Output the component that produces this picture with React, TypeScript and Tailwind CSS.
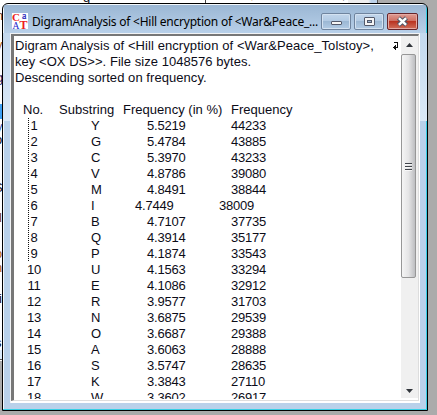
const rows = [
  ['1', 'Y', '5.5219', '44233'], ['2', 'G', '5.4784', '43885'], ['3', 'C', '5.3970', '43233'],
  ['4', 'V', '4.8786', '39080'], ['5', 'M', '4.8491', '38844'], ['6', 'I', '4.7449', '38009'],
  ['7', 'B', '4.7107', '37735'], ['8', 'Q', '4.3914', '35177'], ['9', 'P', '4.1874', '33543'],
  ['10', 'U', '4.1563', '33294'], ['11', 'E', '4.1086', '32912'], ['12', 'R', '3.9577', '31703'],
  ['13', 'N', '3.6875', '29539'], ['14', 'O', '3.6687', '29388'], ['15', 'A', '3.6063', '28888'],
  ['16', 'S', '3.5747', '28635'], ['17', 'K', '3.3843', '27110'], ['18', 'W', '3.3602', '26917'],
];

function AppIcon() {
  return (
    <svg width="17" height="17" viewBox="0 0 17 17" className="shrink-0" fontFamily="'Liberation Serif', serif">
      <rect width="16" height="16" fill="#fff" />
      <text x="0" y="8.1" fontSize="11" fontWeight="bold" fill="#ed1c24">C</text>
      <text x="10" y="6" fontSize="10" fill="#2222bb" stroke="#2222bb" strokeWidth="0.2">a</text>
      <text x="0.6" y="15.6" fontSize="9.5" fill="#2222cc">A</text>
      <text x="7.6" y="15.8" fontSize="12" fontWeight="bold" fill="#ed1c24">T</text>
    </svg>
  );
}

function Controls() {
  return (
    <svg width="98" height="17" viewBox="0 0 98 17" className="shrink-0">
      <defs>
        <linearGradient id="btn" x1="0" y1="0" x2="0" y2="1">
          <stop offset="0" stopColor="#c3d7ec" /><stop offset=".46" stopColor="#b2cae3" />
          <stop offset=".48" stopColor="#9bb7d3" /><stop offset="1" stopColor="#b4cde6" />
        </linearGradient>
        <linearGradient id="close" x1="0" y1="0" x2="0" y2="1">
          <stop offset="0" stopColor="#df9f97" /><stop offset=".46" stopColor="#cf6f62" />
          <stop offset=".48" stopColor="#b9311f" /><stop offset="1" stopColor="#d2735e" />
        </linearGradient>
      </defs>
      <g strokeWidth="1">
        <rect x=".5" y=".5" width="29" height="16" rx="1.5" fill="url(#btn)" stroke="#6f849e" />
        <rect x="1.5" y="1.5" width="27" height="14" rx="1" fill="none" stroke="#d4e2f1" />
        <rect x="33.5" y=".5" width="29" height="16" rx="1.5" fill="url(#btn)" stroke="#6f849e" />
        <rect x="34.5" y="1.5" width="27" height="14" rx="1" fill="none" stroke="#d4e2f1" />
        <rect x="66.5" y=".5" width="30" height="16" rx="1.5" fill="url(#close)" stroke="#66242a" />
        <rect x="67.5" y="1.5" width="28" height="14" rx="1" fill="none" stroke="#e5aaa4" />
        <rect x="10.5" y="8.5" width="10" height="3" rx=".5" fill="#f5f5f5" stroke="#53596a" />
        <rect x="43.5" y="4.5" width="10" height="8" rx=".5" fill="#f5f5f5" stroke="#53596a" />
        <rect x="46.5" y="7.5" width="4" height="2" fill="#9db7d2" stroke="#53596a" />
      </g>
      <path d="M77.5 5 85.5 12M85.5 5 77.5 12" stroke="#535666" strokeWidth="4.6" />
      <path d="M77.9 5.2 85.1 11.8M85.1 5.2 77.9 11.8" stroke="#fff" strokeWidth="2.5" />
    </svg>
  );
}

function ScrollBar() {
  return (
    <div className="flex h-[362px] w-[17px] shrink-0 flex-col items-start bg-[#f0f0f0]">
      <svg width="17" height="18" viewBox="0 0 17 18"><path d="M5 11h7L8.5 7z" fill="#30343a" /></svg>
      <div className="flex h-[224px] w-[15px] items-center justify-center rounded-[2px] border border-[#979797] bg-linear-to-r from-[#f5f5f5] via-[#e5e5e6] to-[#bdbec1]">
        <svg width="9" height="9" viewBox="0 0 9 9">
          <path d="M1 1.5h7M1 4.5h7M1 7.5h7" stroke="#40444a" />
          <path d="M1 2.5h7M1 5.5h7M1 8.5h7" stroke="#fff" strokeWidth=".7" />
        </svg>
      </div>
      <div className="grow" />
      <svg width="17" height="18" viewBox="0 0 17 18"><path d="M5 9h7l-3.5 4z" fill="#30343a" /></svg>
    </div>
  );
}

function BackgroundWindow() {
  return (
    <div className="flex h-[361px] w-[378px] items-start bg-white">
      <div className="flex h-[361px] w-[2px] shrink-0 flex-col overflow-hidden whitespace-nowrap">
        <span className="mt-[8px] -ml-1 text-[#713b22]">n</span>
        <span className="mt-[13px] -ml-1 text-[#a75a20]">y</span>
        <span className="mt-[17px] -ml-1 text-[#202060]">g</span>
        <div className="mt-[18px] h-[15px] w-[2px] shrink-0 bg-[#3da0f4]" />
        <span className="-ml-1 h-[13px] text-[#3158b0]">y</span>
        <span className="-ml-[5px]">o</span>
        <span className="mt-8 -ml-1.5">S</span>
        <span className="mt-[14px] -ml-px text-[#713b22]">l</span>
        <span className="mt-5 -ml-[5px] h-[14px] text-[#a75a20]">o</span>
        <span className="-ml-[5px] text-[#a75a20]">n</span>
        <span className="mt-[15px] -ml-px">i</span>
        <span className="mt-7 -ml-[5px] h-[15px]">s</span>
        <div className="h-[10px] w-[3px] shrink-0 border-b border-[#555] bg-[#dcebfa]" />
      </div>
      <div className="flex h-3 grow items-start overflow-hidden">
        <span className="-mt-[10px] ml-[81px]">g</span>
        <div className="ml-[115px] h-1 w-px bg-[#444]" />
        <span className="-mt-[13px] ml-[44px] text-[#bd7b24]">,</span>
        <span className="-mt-[13px] ml-[88px]">,</span>
        <div className="ml-[3px] h-3 grow border-r border-[#555] bg-linear-to-r from-[#eee] from-70% to-[#bcd2ea] to-80%" />
      </div>
    </div>
  );
}

export default function App() {
  return (
    <div className="relative h-[415px] w-[437px] overflow-hidden bg-[#ababab] font-['Liberation_Sans',Arial,sans-serif] text-[13px] leading-4 text-[#0c0c18]">
      <BackgroundWindow />

      <div className="absolute top-[3px] left-[2px] flex h-[408px] w-[426px] flex-col overflow-hidden rounded-t-[6px] border border-black bg-[#b9d1ea] shadow-[inset_-1px_-1px_0_#35cfe5,inset_1px_1px_0_#f3f8fc]">
        <div className="mx-px mt-px flex h-[28px] shrink-0 items-end bg-linear-to-b from-[#9bb7d4] to-[#b8d0e9] pr-[8px] pb-[3px] pl-[8px]">
          <AppIcon />
          <span className="ml-[3px] w-[286px] shrink-0 whitespace-nowrap font-['Noto_Sans','Open_Sans',sans-serif] text-[12px] tracking-[-0.23px] text-black">DigramAnalysis of &lt;Hill encryption of &lt;War&amp;Peace_...</span>
          <div className="ml-[3px] flex"><Controls /></div>
        </div>
        <div className="flex h-[370px] shrink-0 bg-linear-to-b from-[#c3d8ee] to-[#dbe9f7] bg-[length:100%_88px] bg-no-repeat pl-[7px]">
          <div className="flex h-[370px] w-[410px] border-t border-l border-[#f1f3f5] bg-white">
            <div className="flex h-[367px] w-[408px] border-t-2 border-r border-b border-l-3 border-t-[#777] border-r-[#ddd] border-b-[#ddd] border-l-[#777]">
              <div className="h-[363px] w-[387px] shrink-0 overflow-hidden bg-white pt-[2px]">
                <div className="flex justify-between pr-[2px] pl-[1px] whitespace-nowrap">
                  <div>
                    <p className="tracking-[0.085px]">Digram Analysis of &lt;Hill encryption of &lt;War&amp;Peace_Tolstoy&gt;,</p>
                    <p className="tracking-[0.045px]">key &lt;OX DS&gt;&gt;. File size 1048576 bytes.</p>
                    <p className="tracking-[0.06px]">Descending sorted on frequency.</p>
                  </div>
                  <svg className="mt-1" width="6" height="10" viewBox="0 0 6 10" fill="#111" shapeRendering="crispEdges">
                    <path d="M1 0h4v1H1zM4 0h1v6H4zM0 5h5v1H0zM1 4h1v3H1zM2 3h1v5H2z" />
                  </svg>
                </div>
                <div className="mt-4 flex h-4 whitespace-nowrap pl-[9px]">
                  <span className="w-[36px] shrink-0">No.</span>
                  <span className="w-[64px] shrink-0 tracking-[0.05px]">Substring</span>
                  <span className="w-[108px] shrink-0 tracking-[0.03px]">Frequency (in %)</span>
                  <span>Frequency</span>
                </div>
                <div className="relative">
                  {rows.map(([no, letter, pct, count]) => (
                    <div key={no} className="flex h-4 pl-[10px] tracking-[-0.23px]">
                      <span className="w-[20px] text-center">{no}</span>
                      <span className="ml-[47px] w-[27px]">{letter}</span>
                      <span className={no === '6' ? 'ml-[17px] w-[84px]' : 'ml-[29px] w-[84px]'}>{pct}</span>
                      <span>{count}</span>
                    </div>
                  ))}
                  <div className="absolute top-0 left-[14px] h-[143px] w-px bg-[repeating-linear-gradient(to_bottom,#111_0_1px,transparent_1px_2px)]" />
                </div>
              </div>
              <ScrollBar />
            </div>
          </div>
        </div>
      </div>
    </div>
  );
}
